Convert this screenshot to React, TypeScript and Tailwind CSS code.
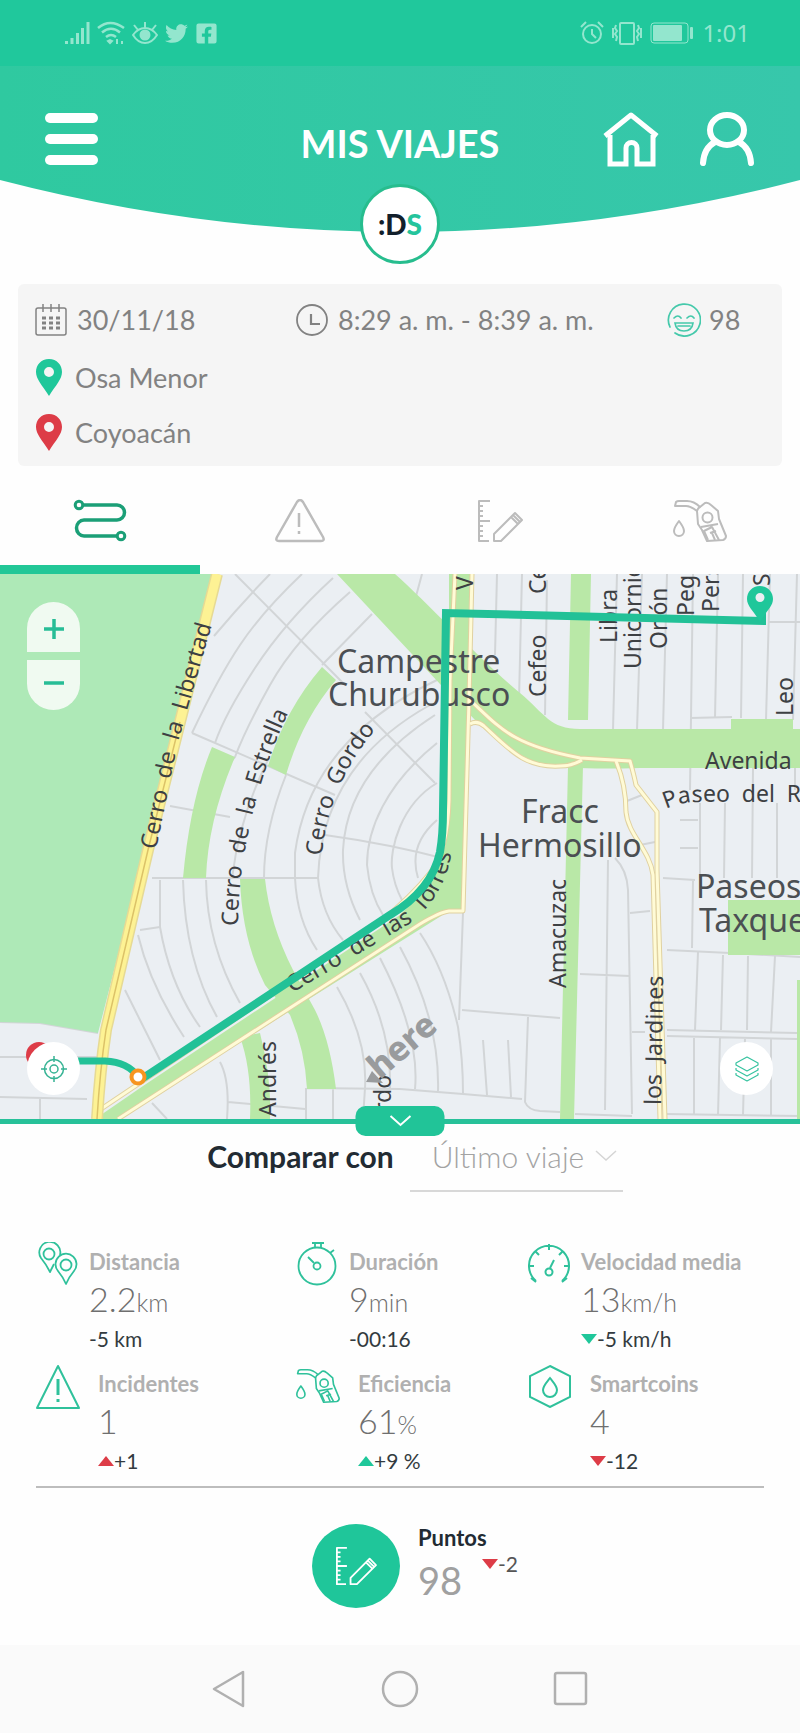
import type { ReactNode } from "react";
import { FaFacebookSquare, FaTwitter } from "react-icons/fa";

const TEAL = "#1fc79a";
const RED = "#dd3c47";

function GasPump({ className }: { className: string }) {
  return (
    <svg viewBox="0 0 54 44" fill="none" stroke="currentColor" strokeWidth="2" strokeLinejoin="round" className={className}>
      <path d="M2 7L3 3Q4 2 6 2H14C19 2 23 4 27 8Q25 9 24 12C20 9 17 7 13 7Z" />
      <path d="M27 8L32 4Q35 3 38 6L45 12L46 20L53 37Q53 40 50 41L34 42L29 31L25 25L24 12" />
      <circle cx="34.500" cy="18.500" r="5" />
      <path d="M28 28L45 25M35 41L31 32L39 28L46 41M37 34L43 32M39 34L42 41" />
      <path d="M6 22C3 26 1 29 1 32a5 5 0 0 0 10 0C11 29 9 26 6 22Z" />
    </svg>
  );
}

function RulerPencil({ className }: { className: string }) {
  return (
    <svg viewBox="0 0 46 44" fill="none" stroke="currentColor" strokeWidth="2" strokeLinejoin="round" className={className}>
      <path d="M13 2H2V42H12M2 7H6M2 12H6M2 17H6M2 22H13M2 27H6M2 32H6M2 37H6" />
      <path d="M17 42V35L38 14L45 21L24 42ZM34 18L41 25M36 16L43 23" />
    </svg>
  );
}

function Pin({ color, className }: { color: string; className: string }) {
  return (
    <svg viewBox="0 0 28 38" className={className}>
      <path fill={color} fillRule="evenodd" d="M14 1C6 1 1 7 1 14C1 21 7 27 14 38C21 27 27 21 27 14C27 7 22 1 14 1ZM14 9a5 5 0 1 1 0 10a5 5 0 0 1 0-10Z" />
    </svg>
  );
}

function StatusBar() {
  return (
    <div className="flex h-[66px] items-center justify-between bg-[#20c89c] pl-[65px] pr-[50px] text-[#93e6ce]">
      <div className="flex items-center gap-[7px]">
        <svg viewBox="0 0 25 24" className="h-6 w-[25px]" fill="currentColor">
          <path d="M0 20h3v3H0zM5.500 17h3v6h-3zM11 12h3v11h-3zM16 7h3v16h-3zM21.500 1h3v22h-3z" />
        </svg>
        <svg viewBox="0 0 28 24" className="h-6 w-7" fill="none" stroke="currentColor" strokeWidth="2.500">
          <path d="M1 7Q13 -3 27 7M5 11.500Q14 4 23 11.500M9 16Q14 12 19 16" />
          <path d="M11 20l2 2 2-2-2-1zM20 18v5M25 20v3" fill="currentColor" strokeWidth="2" />
        </svg>
        <svg viewBox="0 0 26 24" className="h-6 w-[26px]" fill="none" stroke="currentColor" strokeWidth="2">
          <path d="M1 14Q6 7 13 7T25 14Q20 22 13 22T1 14ZM13 7V1M6 9L2 4M20 9L24 4" />
          <circle cx="13" cy="14" r="4.500" fill="currentColor" />
        </svg>
        <FaTwitter size={23} />
        <FaFacebookSquare size={23} />
      </div>
      <div className="flex items-center gap-2">
        <svg viewBox="0 0 24 24" className="h-6 w-6" fill="none" stroke="currentColor" strokeWidth="2">
          <circle cx="12" cy="13" r="9" />
          <path d="M12 8v5l4 4M1 6l5-5M23 6l-5-5" />
        </svg>
        <svg viewBox="0 0 30 24" className="h-6 w-[30px]" fill="none" stroke="currentColor" strokeWidth="2">
          <rect x="8" y="2" width="14" height="21" rx="1" />
          <path d="M4 4l-1 3 2 3-2 3 2 3-1 4M1 7v10M26 4l1 3-2 3 2 3-2 3 1 4M29 7v10" />
        </svg>
        <svg viewBox="0 0 44 22" className="h-[22px] w-11" fill="currentColor">
          <rect x="1" y="1" width="37" height="20" rx="3" fill="none" stroke="currentColor" strokeWidth="1" />
          <rect x="3" y="3" width="29" height="16" rx="1" />
          <rect x="40" y="5" width="3" height="12" rx="1" />
        </svg>
        <span className="font-['Noto_Sans'] text-2xl leading-8">1:01</span>
      </div>
    </div>
  );
}

function Header() {
  return (
    <header className="relative h-[166px]">
      <svg viewBox="0 0 800 166" preserveAspectRatio="none" className="absolute inset-0 h-full w-full">
        <defs>
          <linearGradient id="head">
            <stop offset="0" stopColor="#2fc9a0" />
            <stop offset="1" stopColor="#37c7ab" />
          </linearGradient>
        </defs>
        <path d="M0 0H800V114Q400 218 0 114Z" fill="url(#head)" />
      </svg>
      <div className="relative grid grid-cols-[1fr_auto_1fr] items-center px-[45px] pt-[45px] text-white">
        <button aria-label="Menú" className="flex w-[53px] flex-col gap-[11px]">
          <span className="h-2.5 rounded-full bg-white" />
          <span className="h-2.5 rounded-full bg-white" />
          <span className="h-2.5 rounded-full bg-white" />
        </button>
        <h1 className="pt-2 text-[38px] font-bold leading-10">MIS VIAJES</h1>
        <div className="flex justify-end gap-10">
          <button aria-label="Inicio">
            <svg viewBox="0 0 56 56" className="size-14" fill="none" stroke="currentColor" strokeWidth="5">
              <path d="M2 25L28 4L54 25" strokeLinejoin="round" />
              <path d="M7 24V53H23V37a5.500 5.500 0 0 1 11 0V53H50V24" />
            </svg>
          </button>
          <button aria-label="Perfil">
            <svg viewBox="0 0 56 56" className="size-14" fill="none" stroke="currentColor" strokeWidth="6" strokeLinecap="round">
              <ellipse cx="28" cy="19" rx="17" ry="15" />
              <path d="M4 52Q5 37 16 31M40 31Q51 37 52 52" />
            </svg>
          </button>
        </div>
      </div>
      <div className="absolute -bottom-8 left-1/2 flex size-20 -translate-x-1/2 items-center justify-center rounded-full border-[3px] border-[#27bd8e] bg-white text-[28px] font-black leading-8 text-[#12202b]">
        <span>
          :D<span className="text-[#25c49c]">S</span>
        </span>
      </div>
    </header>
  );
}

function TripCard() {
  return (
    <section className="mx-[18px] mt-[52px] rounded-md bg-[#f5f5f5] px-[17px] pb-[15px] pt-[18px] text-[27px] leading-9 text-[#828282]">
      <div className="grid h-9 grid-cols-[261fr_371fr_98fr] items-center">
        <div className="flex items-center gap-2.5">
          <svg viewBox="0 0 32 32" className="size-8" fill="none" stroke="currentColor" strokeWidth="1.500">
            <rect x="1" y="4" width="30" height="27" rx="2" />
            <path d="M8 0v8M16 0v8M24 0v8" />
            <path d="M7 14h18M7 19h18M7 24h18" strokeWidth="3" strokeDasharray="4 3" />
          </svg>
          <span>30/11/18</span>
        </div>
        <div className="flex items-center gap-2.5">
          <svg viewBox="0 0 32 32" className="size-8" fill="none" stroke="currentColor" strokeWidth="1.800">
            <circle cx="16" cy="16" r="15" />
            <path d="M15 10v10h9" strokeWidth="2.200" />
          </svg>
          <span>8:29 a. m. - 8:39 a. m.</span>
        </div>
        <div className="flex items-center gap-2">
          <svg viewBox="0 0 34 34" className="size-[34px]" fill="none" stroke="#45c9ab" strokeWidth="1.700" strokeLinecap="round">
            <path d="M3 24A16 16 0 1 1 8 30" />
            <path d="M7 15q4-4 7 0M20 15q4-4 7 0M8 20H26Q25 28 17 28T8 20ZM11 23H23" />
          </svg>
          <span>98</span>
        </div>
      </div>
      <div className="mt-5 flex h-[38px] items-center gap-3">
        <Pin color={TEAL} className="h-[38px] w-7" />
        <span className="pt-0.5">Osa Menor</span>
      </div>
      <div className="mt-[17px] flex h-[38px] items-center gap-3">
        <Pin color={RED} className="h-[38px] w-7" />
        <span className="pt-0.5">Coyoacán</span>
      </div>
    </section>
  );
}

function Tab({ label, active, children }: { label: string; active?: boolean; children: ReactNode }) {
  return (
    <button
      role="tab"
      aria-label={label}
      aria-selected={!!active}
      className={
        active
          ? "flex h-[108px] items-center justify-center border-b-[9px] border-[#22c797] pt-2.5 text-[#1b9f77]"
          : "flex h-[108px] items-center justify-center border-b-[9px] border-transparent pt-2.5 text-[#bcbcbc]"
      }
    >
      {children}
    </button>
  );
}

function Tabs() {
  return (
    <nav role="tablist" className="grid grid-cols-4">
      <Tab label="Ruta" active>
        <svg viewBox="0 0 54 44" className="h-11 w-[54px]" fill="none" stroke="currentColor" strokeWidth="3.500">
          <path d="M10 6H44A7.500 7.500 0 0 1 44 21H11A7.500 8 0 0 0 11 37H43" />
          <circle cx="6" cy="6" r="3.800" strokeWidth="3" />
          <circle cx="48" cy="37" r="3.800" strokeWidth="3" />
        </svg>
      </Tab>
      <Tab label="Incidentes">
        <svg viewBox="0 0 50 44" className="h-11 w-[50px]" fill="none" stroke="currentColor" strokeWidth="2.500" strokeLinejoin="round">
          <path d="M22 3Q25 -1 28 3L48 38Q50 42 46 42H4Q0 42 2 38Z" />
          <path d="M24 14V28M24 32V35" />
        </svg>
      </Tab>
      <Tab label="Puntos">
        <RulerPencil className="h-11 w-[46px]" />
      </Tab>
      <Tab label="Combustible">
        <GasPump className="h-11 w-[54px]" />
      </Tab>
    </nav>
  );
}

const streets = [
  "M270 574Q240 605 214 636M302 574Q262 612 240 645T192 733M333 578Q285 622 255 668T215 743M350 592Q295 640 270 685T235 757L206 790M372 614L322 665",
  "M235 574L345 685M365 712L435 783M192 733L335 795M170 806L230 817M325 835Q390 844 450 860M152 878H318M140 930L160 927",
  "M268 760Q240 815 232 878M286 775Q264 830 264 878M437 680Q310 740 295 853V878M430 705Q322 765 318 878",
  "M435 715C365 760 345 810 343 850Q342 885 360 920M437 743C385 785 367 830 367 865Q370 895 383 915M437 783C400 805 390 850 392 868Q394 885 402 900M437 820Q408 845 418 878",
  "M160 880V927Q170 985 200 1027M183 880Q185 960 217 1017M206 880Q207 945 240 1003M138 935Q150 985 184 1037M125 990L160 1060",
  "M295 878Q297 920 317 950M318 878Q322 915 343 940M337 987Q368 1040 365 1088L363 1119M360 973Q392 1030 390 1088M380 958Q420 1035 415 1089M400 947Q440 1020 438 1091M420 933Q445 970 458 1027Q463 1060 463 1093",
  "M0 1022L40 1023L98 1033M0 1057H100M0 1097L87 1099M40 1098V1119M152 1103L167 1119M220 1062Q230 1080 227 1119M228 1102L305 1109M307 1088L400 1089L463 1094L522 1099M306 1088V1119M333 1088V1119",
  "M463 913L459 1020M462 1010L560 1018M528 1017L525 1102Q528 1110 540 1111L560 1112M483 1040L487 1095M508 1040L511 1097M580 974L630 976M608 860L605 1110M615 858Q627 870 628 890L632 1114M575 1114L632 1116M630 913L650 911M632 1032H645",
  "M422 574L415 600M497 574L495 655M522 574L519 700M547 580L545 715M617 574L613 730M642 574L637 730M667 574L663 730M693 574L690 790M718 574L715 717M743 574L741 718M770 574L766 720M797 574L793 720M768 622H800M690 718L732 717",
  "M753 768L752 878M795 768V790M700 803V878M725 803L724 878M777 803V878M627 801L642 795M640 845L655 842M680 820H698M680 848H698M663 878L695 880M693 880L692 948M667 950L730 953L800 957",
  "M698 952L695 1030M723 955L721 1030M748 956L747 1030M775 956L771 1032M667 1030L797 1033M667 1036L797 1039M694 1038V1115M720 1038L718 1115M745 1038L743 1115M771 1038V1115M665 1114L800 1116",
];

const lanes = [
  "M455 574L450 680L449 800Q448 850 430 873T380 922L98 1111",
  "M472 574L469 700L463 911H449Q440 912 420 924L118 1119",
  "M470 700C500 728 512 745 580 758L630 761Q634 775 636 785L657 812V870L665 1119",
  "M470 724Q477 720 484 726C510 750 525 768 560 766Q572 766 582 760M616 761Q626 785 626 812C628 835 650 850 653 875L660 1119",
];

const GAP = "\u00a0\u00a0";

const labelPaths = [
  { id: "libertad", d: "M156 850L178 742L222 590", words: ["Cerro", "de", "la", "Libertad"] },
  { id: "estrella", d: "M238 926C238 850 262 760 300 690", words: ["Cerro", "de", "la", "Estrella"] },
  { id: "gordo", d: "M322 856C326 805 350 750 395 710", words: ["Cerro", "Gordo"] },
  { id: "torres", d: "M292 993L409 924Q452 892 454 830V740", words: ["Cerro", "de", "las", "Torres"] },
  { id: "paseo", d: "M666 809Q680 802 700 802H900", words: ["Paseo", "del", "R"] },
];

const verticalLabels = [
  { x: 473, y: 590, text: "V" },
  { x: 546, y: 594, text: "Ce" },
  { x: 546, y: 697, text: "Cefeo" },
  { x: 617, y: 643, text: "Libra" },
  { x: 641, y: 669, text: "Unicornio" },
  { x: 667, y: 649, text: "Orión" },
  { x: 694, y: 616, text: "Pegaso" },
  { x: 719, y: 612, text: "Perseo" },
  { x: 770, y: 586, text: "Sirio" },
  { x: 793, y: 716, text: "Leo" },
  { x: 566, y: 988, text: "Amacuzac" },
  { x: 276, y: 1117, text: "Andrés" },
  { x: 391, y: 1112, text: "rdo" },
];

function MapDrawing() {
  return (
    <svg viewBox="0 574 800 545" className="block w-full" role="img" aria-label="Mapa del viaje">
      <rect y="574" width="800" height="545" fill="#ebeff3" />
      <g fill="none" stroke="#d2d5d7" strokeWidth="2">
        {streets.map((d) => (
          <path key={d} d={d} />
        ))}
      </g>
      <path d="M0 574H213L145 850L98 1033L40 1023L0 1022Z" fill="#aee9b7" />
      <g fill="#b9e8a7">
        <path d="M337 574H395C430 605 480 660 520 693C545 714 550 729 580 729H731V719H793V729H800V768H640Q575 770 545 765C515 757 495 735 477 722L440 684Z" />
        <path d="M449 574H472L463 911H449L118 1119H95L143 1086L400 915Q449 870 449 800Z" />
        <path d="M571 574H591L588 720H568ZM568 766H583L574 1119H560ZM728 900H800V955H728ZM797 980H800V1119H797Z" />
        <path d="M322 667L336 680Q302 720 286 775L268 766Q285 710 322 667ZM212 747L235 757Q208 820 206 878H183Q190 800 212 747Z" />
        <path d="M240 879H265Q270 925 293 970L315 1010Q330 1040 336 1089H307Q305 1050 290 1015L265 985Q242 940 240 879ZM240 1037L260 1033Q272 1080 270 1119H250Q252 1070 240 1037Z" />
      </g>
      <g fill="none" strokeLinejoin="round">
        {lanes.map((d) => (
          <path key={d} d={d} stroke="#e0d1a0" strokeWidth="5" />
        ))}
        {lanes.map((d) => (
          <path key={d} d={d} stroke="#fffbd6" strokeWidth="3" />
        ))}
        <path d="M217 574L148 850L106 1030Q100 1070 97 1119" stroke="#e6da94" strokeWidth="12" />
        <path d="M217 574L148 850L106 1030Q100 1070 97 1119" stroke="#fdf294" strokeWidth="9" />
        <path d="M180 722L148 850L106 1030Q100 1070 97 1119" stroke="#dcc268" strokeWidth="1.500" />
      </g>

      <g fill="#4b4f53" fontFamily="'Noto Sans', sans-serif" fontSize="32">
        <text x="337" y="673">Campestre</text>
        <text x="328" y="706">Churubusco</text>
        <text x="521" y="823">Fracc</text>
        <text x="478" y="857">Hermosillo</text>
        <text x="696" y="898">Paseos</text>
        <text x="699" y="932">Taxqueña</text>
      </g>
      <g fill="#3d4043" fontFamily="'Noto Sans', sans-serif" fontSize="23">
        {labelPaths.map((label) => (
          <g key={label.id}>
            <path id={label.id} d={label.d} fill="none" />
            <text>
              <textPath href={`#${label.id}`}>{label.words.join(GAP)}</textPath>
            </text>
          </g>
        ))}
        {verticalLabels.map((label) => (
          <text key={label.text} transform={`translate(${label.x} ${label.y}) rotate(-90)`}>
            {label.text}
          </text>
        ))}
        <text transform="translate(661 1105) rotate(-89)">{["los", "Jardines"].join(GAP)}</text>
        <text x="705" y="769">Avenida</text>
      </g>
      <text transform="translate(380 1080) rotate(-41)" fill="#999b9d" fontFamily="'Noto Sans', sans-serif" fontSize="34" fontWeight="800">here</text>
      <path d="M366 1082L372 1071L383 1083Z" fill="#999b9d" />

      <g fill="none" stroke="#22c197" strokeWidth="8">
        <path d="M78 1061H105Q128 1062 138 1077" strokeWidth="7" />
        <path d="M140 1080L390 915Q432 890 440 852Q443 835 443 810L446 613L762 621V610" />
      </g>
      <circle cx="138" cy="1077" r="6.500" fill="#fff" stroke="#f7951f" strokeWidth="4" />
      <path fill={TEAL} fillRule="evenodd" d="M760 586C752 586 747 592 747 599C747 606 753 610 760 622C767 610 773 606 773 599C773 592 768 586 760 586ZM760 593a4.500 4.500 0 1 1 0 9a4.500 4.500 0 0 1 0-9Z" />
      <circle cx="39" cy="1055" r="13" fill={RED} />
    </svg>
  );
}

function TripMap() {
  return (
    <section className="relative border-b-[5px] border-[#27c199]">
      <div className="overflow-hidden">
        <MapDrawing />
      </div>
      <div className="absolute left-[27px] top-7 flex flex-col gap-2 text-[#27bd96]">
        <button aria-label="Acercar" className="flex h-[50px] w-[53px] items-center justify-center rounded-t-full bg-[#f0faf1]">
          <svg viewBox="0 0 20 20" className="mt-1 size-5" stroke="currentColor" strokeWidth="3.500">
            <path d="M0 10H20M10 0V20" />
          </svg>
        </button>
        <button aria-label="Alejar" className="flex h-[50px] w-[53px] items-center justify-center rounded-b-full bg-[#f0faf1]">
          <svg viewBox="0 0 20 20" className="mb-1 size-5" stroke="currentColor" strokeWidth="3.500">
            <path d="M0 10H20" />
          </svg>
        </button>
      </div>
      <button aria-label="Mi ubicación" className="absolute bottom-6 left-[27px] flex size-[53px] items-center justify-center rounded-full bg-white">
        <svg viewBox="0 0 26 26" className="size-[26px]" fill="none" stroke="#36b394" strokeWidth="1.500">
          <circle cx="13" cy="13" r="9.500" />
          <circle cx="13" cy="13" r="4" />
          <path d="M13 0V6M13 20V26M0 13H6M20 13H26" />
        </svg>
      </button>
      <button aria-label="Capas" className="absolute bottom-6 right-[27px] flex size-[53px] items-center justify-center rounded-full bg-white">
        <svg viewBox="0 0 24 26" className="h-[26px] w-6" fill="none" stroke="#36c3a0" strokeWidth="1.200" strokeLinejoin="round">
          <path d="M12 1L23 7V9L12 15L1 9V7ZM1 12V14L12 20L23 14V12M1 17V19L12 25L23 19V17" />
        </svg>
      </button>
      <button aria-label="Contraer mapa" className="absolute -bottom-[17px] left-1/2 flex h-[30px] w-[89px] -translate-x-1/2 items-center justify-center rounded-[10px] bg-[#21c498]">
        <svg viewBox="0 0 22 12" className="h-3 w-[22px]" fill="none" stroke="#fff" strokeWidth="2">
          <path d="M1 1L11 10L21 1" />
        </svg>
      </button>
    </section>
  );
}

function Compare() {
  return (
    <div className="flex items-start justify-center gap-4 pl-[30px] pt-2 text-[30px] leading-10">
      <label htmlFor="compare" className="pt-1 font-bold text-[#222b33]">
        Comparar con
      </label>
      <div className="relative w-[213px] border-b-2 border-[#d8d8d8] pb-3.5 pt-1">
        <select id="compare" className="block w-full appearance-none bg-transparent pl-[22px] font-light text-[#a3a3a3]">
          <option>Último viaje</option>
        </select>
        <svg viewBox="0 0 22 12" className="pointer-events-none absolute right-1.5 top-[18px] h-3 w-[22px]" fill="none" stroke="#d5d5d5" strokeWidth="1.500">
          <path d="M1 1L11 10L21 1" />
        </svg>
      </div>
    </div>
  );
}

function Triangle({ direction, color }: { direction: "up" | "down"; color: string }) {
  return (
    <svg viewBox="0 0 16 10" className="h-2.5 w-4">
      <path d={direction === "up" ? "M0 10L8 0L16 10Z" : "M0 0L8 10L16 0Z"} fill={color} />
    </svg>
  );
}

type StatProps = {
  icon: ReactNode;
  label: string;
  value: string;
  unit?: string;
  delta: string;
  trend?: ReactNode;
  wide?: boolean;
};

function Stat({ icon, label, value, unit, delta, trend, wide }: StatProps) {
  return (
    <div className="flex h-[122px]">
      <div className={wide ? "w-[62px] shrink-0 text-[#2fc19b]" : "w-[53px] shrink-0 text-[#2fc19b]"}>{icon}</div>
      <div className="min-w-0 whitespace-nowrap pt-1">
        <div className="text-[22px] font-bold leading-8 text-[#b0b0b0]">{label}</div>
        <div className="text-[34px] font-light leading-[42px] text-[#6f6f6f]">
          {value}
          <span className="text-[25px]">{unit}</span>
        </div>
        <div className="flex items-center text-[21px] leading-8 text-[#333b40]">
          {trend}
          {delta}
        </div>
      </div>
    </div>
  );
}

function Stats() {
  return (
    <section className="mx-9 mt-[50px] grid grid-cols-[260fr_232fr_236fr] border-b-2 border-[#bdbdbd]">
      <Stat
        label="Distancia"
        value="2.2"
        unit="km"
        delta="-5 km"
        icon={
          <svg viewBox="0 0 44 44" className="size-11" fill="none" stroke="currentColor" strokeWidth="1.800" strokeLinejoin="round">
            <path d="M18 22Q16 26 14 30Q10 22 5 16A10.500 10.500 0 1 1 24 13" />
            <circle cx="13" cy="12" r="5.500" />
            <path d="M30 42Q27 35 22 29A10.500 10.500 0 1 1 38 29Q33 35 30 42Z" />
            <circle cx="30" cy="23" r="5.500" />
          </svg>
        }
      />
      <Stat
        label="Duración"
        value="9"
        unit="min"
        delta="-00:16"
        icon={
          <svg viewBox="0 0 44 44" className="size-11" fill="none" stroke="currentColor" strokeWidth="1.800">
            <circle cx="21" cy="24" r="18.500" />
            <circle cx="21" cy="24" r="3.500" />
            <path d="M12 15L18 21M16 1H28M19 1V6M25 1V6M34 11L38 8" />
          </svg>
        }
      />
      <Stat
        label="Velocidad media"
        value="13"
        unit="km/h"
        delta="-5 km/h"
        trend={<Triangle direction="down" color={TEAL} />}
        icon={
          <svg viewBox="0 0 44 44" className="size-11" fill="none" stroke="currentColor" strokeWidth="2">
            <path d="M8 39A20 20 0 1 1 34 39M3 36L8 40M39 36L34 40M21 2V8M7 9L11 13M35 9L31 13M1 24H6M41 24H36" />
            <circle cx="21" cy="30" r="3.500" />
            <path d="M22 26L26 18" />
          </svg>
        }
      />
      <Stat
        wide
        label="Incidentes"
        value="1"
        delta="+1"
        trend={<Triangle direction="up" color={RED} />}
        icon={
          <svg viewBox="0 0 44 46" className="h-[46px] w-11" fill="none" stroke="currentColor" strokeWidth="2" strokeLinejoin="round">
            <path d="M22 2L43 44H1Z" />
            <path d="M22 15V31M22 35V38" strokeWidth="3" />
          </svg>
        }
      />
      <Stat
        wide
        label="Eficiencia"
        value="61"
        unit="%"
        delta="+9 %"
        trend={<Triangle direction="up" color={TEAL} />}
        icon={<GasPump className="mt-1 h-9 w-11" />}
      />
      <Stat
        wide
        label="Smartcoins"
        value="4"
        delta="-12"
        trend={<Triangle direction="down" color={RED} />}
        icon={
          <svg viewBox="0 0 44 44" className="size-11" fill="none" stroke="currentColor" strokeWidth="2">
            <path d="M22 2L42 12V33L22 43L2 33V12Z" />
            <path d="M22 14C18 19 15 22 15 26a7 7 0 0 0 14 0C29 22 26 19 22 14Z" />
          </svg>
        }
      />
    </section>
  );
}

function Points() {
  return (
    <section className="flex h-[157px] justify-center pl-[30px] pt-9">
      <div className="flex h-[84px] w-[88px] items-center justify-center rounded-[50%] bg-[#1fc69a] text-white">
        <RulerPencil className="h-10 w-[46px]" />
      </div>
      <div className="ml-[18px]">
        <div className="text-[22px] font-bold leading-7 text-[#222b33]">Puntos</div>
        <div className="flex gap-5">
          <span className="text-[38px] leading-[56px] text-[#a0a0a0]">98</span>
          <span className="flex h-6 items-center text-[21px] text-[#555]">
            <Triangle direction="down" color={RED} />
            -2
          </span>
        </div>
      </div>
    </section>
  );
}

function NavBar() {
  return (
    <nav className="flex h-[88px] items-center justify-center gap-[134px] bg-[#fafafa] text-[#b0b0b0]">
      <button aria-label="Atrás">
        <svg viewBox="0 0 36 38" className="h-[38px] w-9" fill="none" stroke="currentColor" strokeWidth="2.500" strokeLinejoin="round">
          <path d="M3 19L32 2V36Z" />
        </svg>
      </button>
      <button aria-label="Inicio del teléfono">
        <svg viewBox="0 0 38 38" className="size-[38px]" fill="none" stroke="currentColor" strokeWidth="2.500">
          <circle cx="19" cy="19" r="17" />
        </svg>
      </button>
      <button aria-label="Recientes">
        <svg viewBox="0 0 36 36" className="size-9" fill="none" stroke="currentColor" strokeWidth="2.500">
          <rect x="2" y="2" width="31" height="31" rx="2" />
        </svg>
      </button>
    </nav>
  );
}

export default function App() {
  return (
    <main className="min-h-screen bg-[#fefefe] font-['Lato',sans-serif]">
      <StatusBar />
      <Header />
      <TripCard />
      <Tabs />
      <TripMap />
      <Compare />
      <Stats />
      <Points />
      <NavBar />
    </main>
  );
}
